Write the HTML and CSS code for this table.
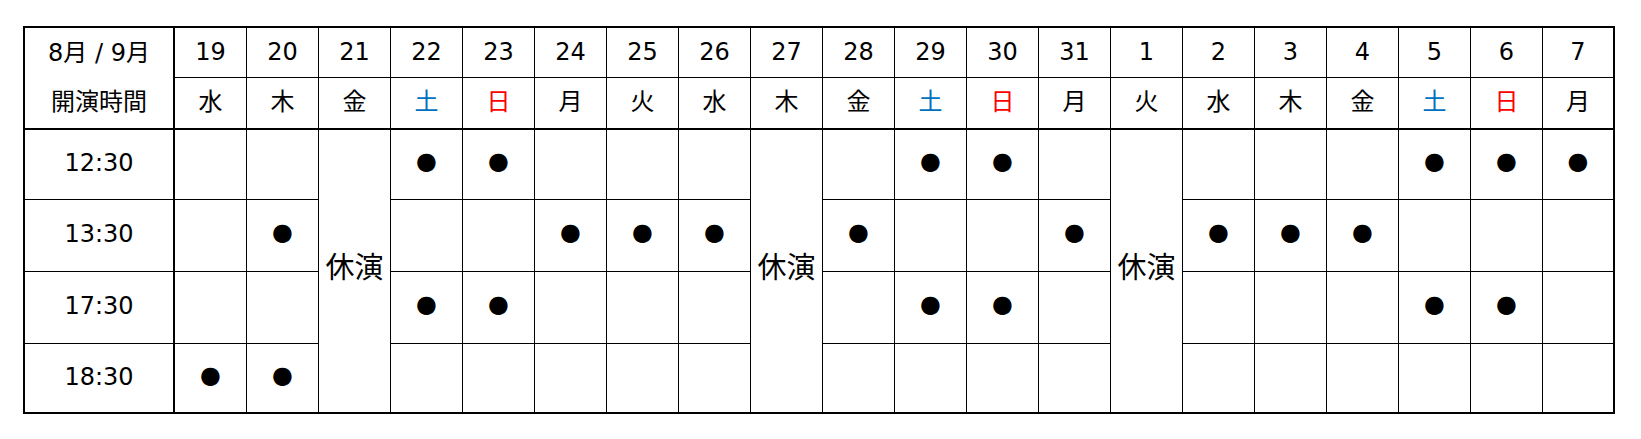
FILE: index.html
```html
<!DOCTYPE html>
<html lang="ja">
<head>
<meta charset="utf-8">
<title>公演スケジュール</title>
<link rel="stylesheet" href="styles.css">
</head>
<body>
<table class="schedule">
  <tbody>
    <tr class="row-date">
      <th class="corner corner-top">8月 / 9月</th>
      <th>19</th><th>20</th><th>21</th><th>22</th><th>23</th><th>24</th><th>25</th><th>26</th><th>27</th><th>28</th>
      <th>29</th><th>30</th><th>31</th><th>1</th><th>2</th><th>3</th><th>4</th><th>5</th><th>6</th><th class="last">7</th>
    </tr>
    <tr class="row-week">
      <th class="corner">開演時間</th>
      <td>水</td><td>木</td><td>金</td><td class="sat">土</td><td class="sun">日</td><td>月</td><td>火</td><td>水</td><td>木</td><td>金</td>
      <td class="sat">土</td><td class="sun">日</td><td>月</td><td>火</td><td>水</td><td>木</td><td>金</td><td class="sat">土</td><td class="sun">日</td><td class="last">月</td>
    </tr>
    <tr class="row-a">
      <th class="time">12:30</th>
      <td></td><td></td><td class="rest" rowspan="4">休演</td><td>●</td><td>●</td><td></td><td></td><td></td><td class="rest" rowspan="4">休演</td><td></td>
      <td>●</td><td>●</td><td></td><td class="rest" rowspan="4">休演</td><td></td><td></td><td></td><td>●</td><td>●</td><td class="last">●</td>
    </tr>
    <tr class="row-b">
      <th class="time">13:30</th>
      <td></td><td>●</td><td></td><td></td><td>●</td><td>●</td><td>●</td><td>●</td>
      <td></td><td></td><td>●</td><td>●</td><td>●</td><td>●</td><td></td><td></td><td class="last"></td>
    </tr>
    <tr class="row-b">
      <th class="time">17:30</th>
      <td></td><td></td><td>●</td><td>●</td><td></td><td></td><td></td><td></td>
      <td>●</td><td>●</td><td></td><td></td><td></td><td></td><td>●</td><td>●</td><td class="last"></td>
    </tr>
    <tr class="row-c">
      <th class="time">18:30</th>
      <td>●</td><td>●</td><td></td><td></td><td></td><td></td><td></td><td></td>
      <td></td><td></td><td></td><td></td><td></td><td></td><td></td><td></td><td class="last"></td>
    </tr>
  </tbody>
</table>
</body>
</html>
```

FILE: styles.css
```css
html, body {
  margin: 0;
  padding: 0;
  background: #ffffff;
}

body {
  padding: 26px 0 0 23px;
  font-family: "DejaVu Sans", "Noto Sans CJK JP", sans-serif;
  color: #000000;
}

.schedule {
  table-layout: fixed;
  width: 1592px;
  border-collapse: separate;
  border-spacing: 0;
  border-top: 2px solid #000;
  border-left: 2px solid #000;
  font-size: 24px;
  line-height: 1.2;
}

.schedule th,
.schedule td {
  box-sizing: border-box;
  width: 72px;
  padding: 0;
  border-right: 1px solid #000;
  border-bottom: 1px solid #000;
  text-align: center;
  vertical-align: middle;
  font-weight: normal;
}

.schedule th.corner,
.schedule th.time {
  width: 150px;
  border-right: 2px solid #000;
}

.schedule th.corner-top {
  border-bottom: none;
}

.schedule .last {
  border-right: 2px solid #000;
}

.row-date th,
.row-date td { height: 50px; }

.row-week th,
.row-week td {
  height: 52px;
  padding-bottom: 2px;
  border-bottom: 2px solid #000;
}

.row-a th, .row-a td { height: 70px; }
.row-b th, .row-b td { height: 72px; }
.row-c th, .row-c td {
  height: 70px;
  border-bottom: 2px solid #000;
}

.row-a td, .row-b td, .row-c td {
  padding-bottom: 6px;
}

.schedule th.time {
  padding-bottom: 2px;
}

.schedule td.rest {
  border-bottom: 2px solid #000;
  padding-bottom: 6px;
  font-size: 29px;
}

.sat { color: #0070c0; }
.sun { color: #ff0000; }
```
